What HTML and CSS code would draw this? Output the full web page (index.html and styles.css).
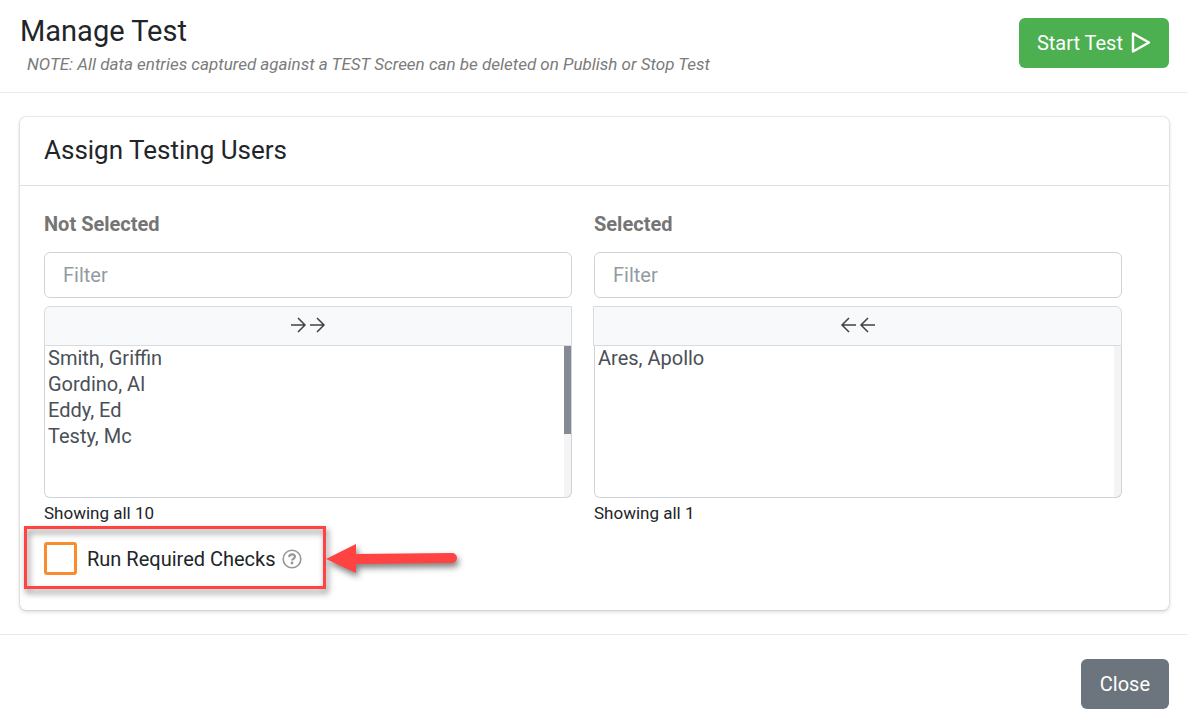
FILE: index.html
```html
<!DOCTYPE html>
<html lang="en">
<head>
  <meta charset="UTF-8" />
  <meta name="viewport" content="width=device-width, initial-scale=1.0"/>
  <title>Manage Test</title>
  <link rel="stylesheet" href="styles.css">
</head>
<body>
  <header class="page-header">
    <div>
      <h1>Manage Test</h1>
      <p class="note">NOTE: All data entries captured against a TEST Screen can be deleted on Publish or Stop Test</p>
    </div>
    <button type="button" class="btn btn-start">
      Start Test
      <svg width="20" height="22" viewBox="0 0 20 22" fill="none" stroke="currentColor" stroke-width="2.4" stroke-linejoin="round" aria-hidden="true">
        <path d="M2 1.500v18l16-9z"/>
      </svg>
    </button>
  </header>

  <main class="content">
    <section class="card">
      <h2>Assign Testing Users</h2>
      <div class="card-body">
        <div class="lists">
          <div class="list-box">
            <label class="list-title" for="filterLeft">Not Selected</label>
            <input type="text" class="filter" id="filterLeft" placeholder="Filter">
            <button type="button" class="move-all" aria-label="Move all">
              <svg width="36" height="16" viewBox="0 0 36 16" fill="none" stroke="currentColor" stroke-width="1.5" aria-hidden="true">
                <path d="M1 8h14M8 1l7 7-7 7M20 8h14M27 1l7 7-7 7"/>
              </svg>
            </button>
            <select multiple class="users users-long" aria-label="Users not selected">
              <option>Smith, Griffin</option>
              <option>Gordino, Al</option>
              <option>Eddy, Ed</option>
              <option>Testy, Mc</option>
              <option></option>
              <option></option>
              <option></option>
              <option></option>
              <option></option>
              <option></option>
            </select>
            <p class="info">Showing all 10</p>
          </div>
          <div class="list-box">
            <label class="list-title" for="filterRight">Selected</label>
            <input type="text" class="filter" id="filterRight" placeholder="Filter">
            <button type="button" class="move-all remove-all" aria-label="Remove all">
              <svg width="36" height="16" viewBox="0 0 36 16" fill="none" stroke="currentColor" stroke-width="1.5" aria-hidden="true">
                <path d="M16 8H2M9 1L2 8l7 7M35 8H21M28 1l-7 7 7 7"/>
              </svg>
            </button>
            <select multiple class="users" aria-label="Users selected">
              <option>Ares, Apollo</option>
            </select>
            <p class="info">Showing all 1</p>
          </div>
        </div>

        <div class="checks">
          <input type="checkbox" id="runChecks">
          <label for="runChecks">Run Required Checks</label>
          <svg class="help" width="20" height="20" viewBox="0 0 20 20" fill="none" stroke="currentColor" aria-hidden="true">
            <circle cx="10" cy="10" r="8.8" stroke-width="1.6"/>
            <path d="M7.1 8C7.3 6.300 8.400 5.400 10 5.400c1.700 0 2.900 1 2.900 2.400 0 2-2.800 2-2.800 3.700" stroke-width="2.2"/>
            <circle cx="10" cy="14" r="1.400" fill="currentColor" stroke="none"/>
          </svg>
          <div class="highlight"></div>
          <svg class="pointer" width="132" height="34" viewBox="0 0 132 34" aria-hidden="true">
            <path d="M0 17L30 2v10l96-1a5 5 0 0 1 0 10l-96 1v9z" fill="#ff4343"/>
          </svg>
        </div>
      </div>
    </section>
  </main>

  <footer class="page-footer">
    <button type="button" class="btn btn-close">Close</button>
  </footer>
</body>
</html>
```

FILE: styles.css
```css
* {
  box-sizing: border-box;
}
body {
  margin: 0;
  font-family: Roboto, "Liberation Sans", sans-serif;
  font-size: 20px;
  color: #212529;
  background: #fff;
}
h1, h2, p {
  margin: 0;
  font-weight: 400;
}
button, input, select {
  font-family: inherit;
  font-size: inherit;
}
.page-header {
  display: flex;
  justify-content: space-between;
  align-items: flex-start;
  padding: 14px 19px 18px 20px;
  border-bottom: 1px solid #e9ecef;
}
h1 {
  font-size: 29px;
  line-height: 34px;
}
.note {
  padding: 6px 0 0 7px;
  font-size: 17px;
  line-height: 20px;
  font-style: italic;
  color: #7b7b7b;
}
.btn {
  display: flex;
  align-items: center;
  gap: 8px;
  height: 50px;
  padding: 0 19px;
  border: 0;
  border-radius: 6px;
  color: #fff;
  cursor: pointer;
}
.btn-start {
  margin-top: 4px;
  padding: 0 18px;
  background: #4caf50;
}
.btn-close {
  background: #6c757d;
}
.content {
  padding: 24px 19px 24px 20px;
}
.card {
  border-radius: 6px;
  box-shadow: 0 0 2px rgba(0, 0, 0, 0.25), 0 2px 4px rgba(0, 0, 0, 0.14);
}
h2 {
  padding: 15px 24px 17px;
  border-bottom: 1px solid #e0e0e0;
  font-size: 26px;
  line-height: 36px;
}
.card-body {
  padding: 23px 25px 35px 24px;
}
.lists {
  display: grid;
  grid-template-columns: 1fr 1fr;
}
.list-box {
  display: flex;
  flex-direction: column;
  padding-right: 22px;
}
.list-title {
  margin-bottom: 13px;
  line-height: 30px;
  font-weight: 700;
  color: #757575;
}
.filter {
  height: 46px;
  margin-bottom: 8px;
  padding: 0 18px;
  border: 1px solid #ced4da;
  border-radius: 6px;
  color: #495057;
}
.filter::placeholder {
  color: #939ba2;
}
.move-all {
  display: flex;
  justify-content: center;
  align-items: center;
  height: 40px;
  padding: 0 0 2px;
  border: 1px solid #d9dcde;
  border-radius: 6px 0 0 0;
  background: #f8f9fb;
  color: #424242;
  cursor: pointer;
}
.remove-all {
  margin-left: -1px;
  border-radius: 0 6px 0 0;
}
.users {
  height: 152px;
  padding: 0;
  border: 1px solid #ced4da;
  border-top: 0;
  border-radius: 0 0 6px 6px;
  /* scroll track stays visible where the browser hides its scrollbars */
  background: linear-gradient(#f4f4f4, #f4f4f4) right top / 7px 100% no-repeat #fff;
  color: #495057;
  overflow-y: scroll;
}
.users-long {
  background:
    linear-gradient(#868a92, #868a92) right top / 7px 88px no-repeat,
    linear-gradient(#f4f4f4, #f4f4f4) right top / 7px 100% no-repeat #fff;
}
.users option {
  height: 26px;
  padding: 0 3px;
  line-height: 26px;
}
.users::-webkit-scrollbar {
  width: 7px;
}
.users::-webkit-scrollbar-track {
  background: #f4f4f4;
}
.users::-webkit-scrollbar-thumb {
  background: #868a92;
}
.info {
  padding-top: 5px;
  font-size: 17px;
  line-height: 20px;
}
.checks {
  position: relative;
  display: flex;
  align-items: center;
  width: max-content;
  margin-top: 19px;
}
.checks input {
  appearance: none;
  width: 33px;
  height: 33px;
  margin: 0 10px 0 0;
  border: 3px solid #fb8c2e;
  border-radius: 3px;
}
.checks input:checked {
  background: #fb8c2e;
}
.help {
  margin-left: 6px;
  color: #969696;
}
/* callout drawn over the checkbox row */
.highlight {
  position: absolute;
  inset: -16px -24px -14px -20px;
  border: 3px solid #ff4343;
  filter: drop-shadow(2px 4px 3px rgba(0, 0, 0, 0.5));
  pointer-events: none;
}
.pointer {
  position: absolute;
  left: 100%;
  top: 0;
  margin-left: 24px;
  overflow: visible;
  filter: drop-shadow(2px 4px 3px rgba(0, 0, 0, 0.5));
  pointer-events: none;
}
.page-footer {
  display: flex;
  justify-content: flex-end;
  padding: 24px 19px 11px;
  border-top: 1px solid #e9ecef;
}
```
